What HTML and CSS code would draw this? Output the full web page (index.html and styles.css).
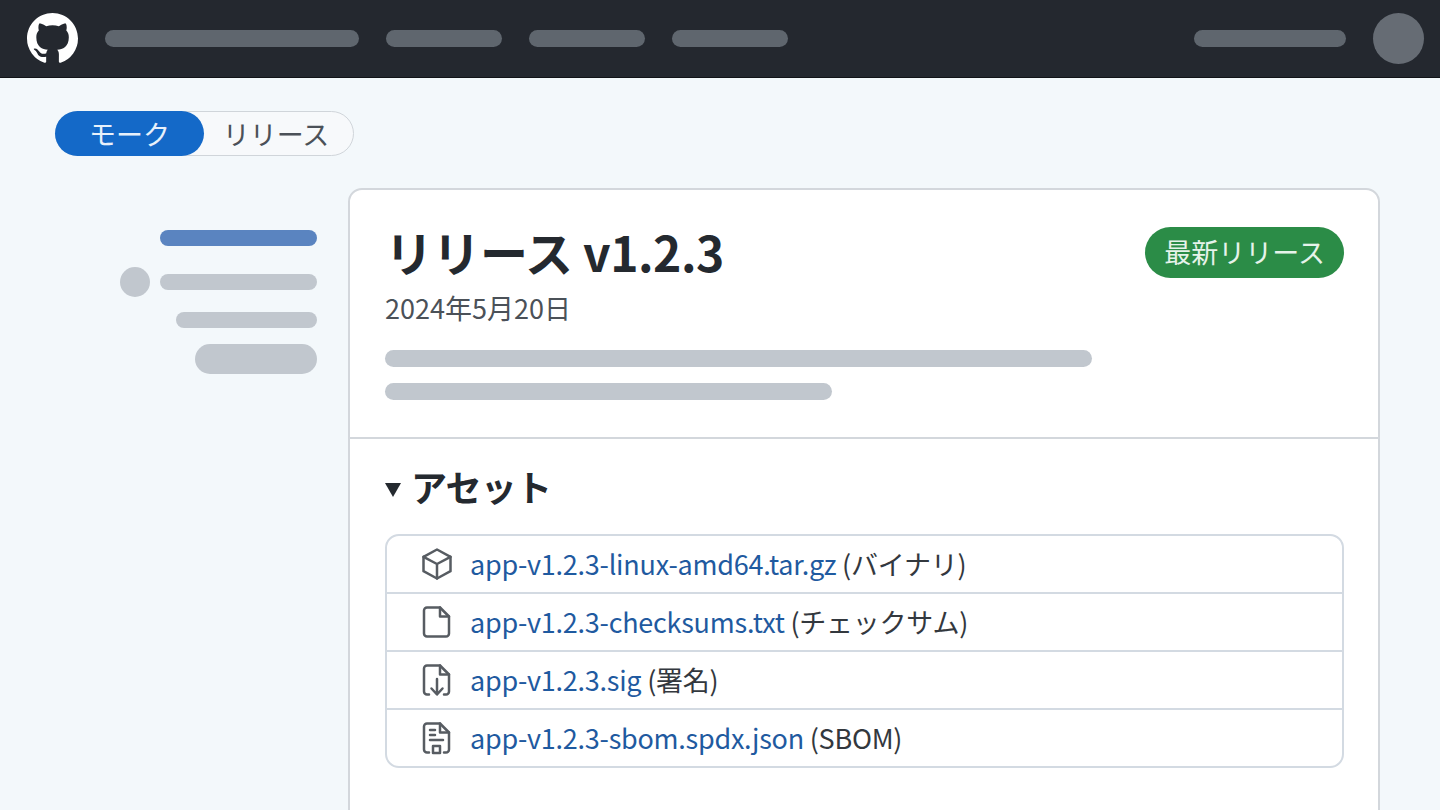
FILE: index.html
```html
<!DOCTYPE html>
<html lang="ja">
<head>
    <meta charset="UTF-8">
    <meta name="viewport" content="width=device-width, initial-scale=1.0">
    <title>リリース v1.2.3</title>
    <link rel="stylesheet" href="styles.css">
</head>
<body>

    <!-- Top bar -->
    <header class="topbar">
        <svg class="logo" viewBox="0 0 16 16" aria-hidden="true">
            <path fill="#ffffff" d="M8 0c4.42 0 8 3.58 8 8a8.013 8.013 0 0 1-5.45 7.59c-.4.08-.55-.17-.55-.38 0-.27.01-1.13.01-2.2 0-.75-.25-1.23-.54-1.48 1.78-.2 3.65-.88 3.65-3.95 0-.88-.31-1.59-.82-2.15.08-.2.36-1.02-.08-2.12 0 0-.67-.22-2.2.82-.64-.18-1.32-.27-2-.27-.68 0-1.36.09-2 .27-1.53-1.03-2.2-.82-2.2-.82-.44 1.1-.16 1.92-.08 2.12-.51.56-.82 1.28-.82 2.15 0 3.06 1.86 3.75 3.64 3.95-.23.2-.44.55-.51 1.07-.46.21-1.61.55-2.33-.66-.15-.24-.6-.83-1.23-.82-.67.01-.27.38.01.53.34.19.73.9.82 1.13.16.45.68 1.31 2.69.94 0 .67.01 1.3.01 1.49 0 .21-.15.45-.55.38A7.995 7.995 0 0 1 0 8c0-4.42 3.58-8 8-8Z"/>
        </svg>
        <nav class="topnav">
            <span class="nav-bar nav-wide"></span>
            <span class="nav-bar"></span>
            <span class="nav-bar"></span>
            <span class="nav-bar"></span>
        </nav>
        <span class="nav-bar nav-user"></span>
        <span class="avatar"></span>
    </header>

    <!-- Mock / release switch -->
    <div class="switch">
        <span class="switch-item active">モーク</span>
        <span class="switch-item">リリース</span>
    </div>

    <div class="layout">
        <!-- Sidebar placeholders -->
        <aside class="sidebar">
            <span class="side-bar side-blue"></span>
            <div class="side-row">
                <span class="side-dot"></span>
                <span class="side-bar side-full"></span>
            </div>
            <span class="side-bar side-mid"></span>
            <span class="side-bar side-pill"></span>
        </aside>

        <main class="card">
            <section class="release-head">
                <div class="title-row">
                    <h1>リリース v1.2.3</h1>
                    <span class="badge">最新リリース</span>
                </div>
                <p class="date">2024年5月20日</p>
                <div class="text-bar text-long"></div>
                <div class="text-bar text-short"></div>
            </section>

            <section class="assets">
                <h2><span class="caret"></span>アセット</h2>
                <ul class="asset-list">
                    <li class="asset">
                        <svg class="asset-icon" viewBox="0 0 32 32" aria-hidden="true">
                            <path d="M16 1.500 29.500 8.800v14.400L16 30.500 2.500 23.200V8.800L16 1.500Z"/>
                            <path d="M2.500 8.800 16 16l13.500-7.200M16 16v14.500"/>
                        </svg>
                        <span class="asset-text"><a href="#">app-v1.2.3-linux-amd64.tar.gz</a> (バイナリ)</span>
                    </li>
                    <li class="asset">
                        <svg class="asset-icon" viewBox="0 0 32 32" aria-hidden="true">
                            <path d="M6 1.500h13l9 9V27.500a3 3 0 0 1-3 3H6a3 3 0 0 1-3-3V4.500a3 3 0 0 1 3-3Z"/>
                            <path d="M19 1.500v9h9"/>
                        </svg>
                        <span class="asset-text"><a href="#">app-v1.2.3-checksums.txt</a> (チェックサム)</span>
                    </li>
                    <li class="asset">
                        <svg class="asset-icon" viewBox="0 0 32 32" aria-hidden="true">
                            <path d="M8 30.500H6a3 3 0 0 1-3-3V4.500a3 3 0 0 1 3-3h13l9 9V27.500a3 3 0 0 1-3 3h-2"/>
                            <path d="M19 1.500v9h9M16 15v15M10.500 24.500l5.500 6 5.500-6"/>
                        </svg>
                        <span class="asset-text"><a href="#">app-v1.2.3.sig</a> (署名)</span>
                    </li>
                    <li class="asset">
                        <svg class="asset-icon" viewBox="0 0 32 32" aria-hidden="true">
                            <path d="M8 30.500H6a3 3 0 0 1-3-3V4.500a3 3 0 0 1 3-3h13l9 9V27.500a3 3 0 0 1-3 3h-2"/>
                            <path d="M19 1.500v9h9M9 8h5M9 13h5M9 18h13M12 24h7v7h-7z"/>
                        </svg>
                        <span class="asset-text"><a href="#">app-v1.2.3-sbom.spdx.json</a> (SBOM)</span>
                    </li>
                </ul>
            </section>
        </main>
    </div>

</body>
</html>
```

FILE: styles.css
```css
body {
    font-family: "Noto Sans CJK JP", "Noto Sans", sans-serif;
    background-color: #f3f8fb;
    color: #24292f;
    margin: 0;
    height: 810px;
    overflow: hidden;
}

.topbar {
    display: flex;
    align-items: center;
    height: 76px;
    padding: 0 16px 1px 27px;
    background-color: #24282f;
    border-bottom: 1px solid #111317;
}

.logo {
    width: 51px;
    height: 51px;
    flex: none;
}

.topnav {
    display: flex;
    align-items: center;
    gap: 27px;
    margin-left: 27px;
    flex: 1;
}

.nav-bar {
    display: block;
    width: 116px;
    height: 17px;
    border-radius: 9px;
    background-color: #5f666e;
}

.nav-wide {
    width: 254px;
}

.nav-user {
    width: 152px;
}

.avatar {
    width: 51px;
    height: 51px;
    margin-left: 27px;
    border-radius: 50%;
    background-color: #666c74;
}

.switch {
    display: flex;
    width: 299px;
    height: 45px;
    margin: 33px 0 0 55px;
    box-sizing: border-box;
    border: 1px solid #d0d5da;
    border-radius: 23px;
    background-color: #f7f9fb;
}

.switch-item {
    display: flex;
    align-items: center;
    justify-content: center;
    flex: 1;
    padding-right: 5px;
    font-size: 27px;
    color: #4b5158;
}

.switch-item.active {
    flex: none;
    width: 149px;
    margin: -1px 0 -1px -1px;
    padding-right: 0;
    border-radius: 23px;
    background-color: #1469c8;
    color: #e8f1fb;
}

.layout {
    display: flex;
    align-items: flex-start;
    margin-top: 32px;
}

.sidebar {
    display: flex;
    flex-direction: column;
    align-items: flex-end;
    width: 317px;
    margin-right: 31px;
    padding-top: 42px;
    flex: none;
}

.side-bar {
    display: block;
    height: 16px;
    border-radius: 8px;
    background-color: #c1c7ce;
}

.side-blue {
    width: 157px;
    background-color: #5a84c0;
}

.side-row {
    display: flex;
    align-items: center;
    gap: 10px;
    margin-top: 21px;
}

.side-dot {
    width: 30px;
    height: 30px;
    border-radius: 50%;
    background-color: #c1c7ce;
}

.side-full {
    width: 157px;
}

.side-mid {
    width: 141px;
    margin-top: 15px;
}

.side-pill {
    width: 122px;
    height: 30px;
    margin-top: 16px;
    border-radius: 15px;
}

.card {
    width: 1032px;
    height: 640px;
    box-sizing: border-box;
    background-color: white;
    border: 2px solid #d3d7dc;
    border-radius: 14px;
}

.release-head {
    height: 249px;
    box-sizing: border-box;
    padding: 29px 34px 0 35px;
    border-bottom: 2px solid #d3d7dc;
}

.title-row {
    display: flex;
    align-items: flex-start;
    justify-content: space-between;
}

h1 {
    margin: 0;
    font-size: 48px;
    font-weight: 700;
    line-height: 64px;
    letter-spacing: -0.5px;
}

.badge {
    margin-top: 8px;
    padding: 0 19px;
    height: 51px;
    line-height: 50px;
    border-radius: 26px;
    background-color: #2b8c47;
    color: #e6f3ea;
    font-size: 27px;
}

.date {
    margin: 5px 0 0;
    font-size: 27px;
    line-height: 40px;
    color: #4b5158;
}

.text-bar {
    height: 17px;
    border-radius: 9px;
    background-color: #c1c7ce;
}

.text-long {
    width: 707px;
    margin-top: 22px;
}

.text-short {
    width: 447px;
    margin-top: 16px;
}

.assets {
    padding: 20px 35px 0;
}

h2 {
    display: flex;
    align-items: center;
    margin: 0;
    font-size: 36px;
    font-weight: 700;
    line-height: 54px;
    letter-spacing: -0.75px;
}

.caret {
    width: 0;
    height: 0;
    margin: 8px 10px 0 0;
    border-left: 8px solid transparent;
    border-right: 8px solid transparent;
    border-top: 14px solid #24292f;
}

.asset-list {
    list-style: none;
    margin: 21px 0 0;
    padding: 0;
    width: 959px;
    box-sizing: border-box;
    border: 2px solid #d3dae2;
    border-radius: 14px;
}

.asset {
    display: flex;
    align-items: center;
    height: 56px;
    padding-left: 34px;
    font-size: 27px;
    color: #33383e;
    letter-spacing: -0.25px;
}

.asset + .asset {
    height: 58px;
    border-top: 2px solid #d3dae2;
    box-sizing: border-box;
}

.asset a {
    color: #1f5aa0;
    text-decoration: none;
}

.asset-text {
    margin-bottom: 2px;
}

.asset-icon {
    width: 32px;
    height: 34px;
    margin-right: 17px;
    flex: none;
    fill: none;
    stroke: #575c62;
    stroke-width: 2.500;
    stroke-linejoin: round;
    stroke-linecap: round;
}
```
